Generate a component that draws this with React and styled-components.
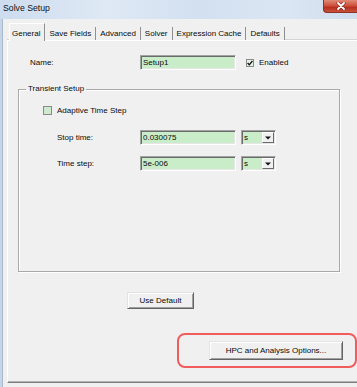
import React from 'react';
import styled, { createGlobalStyle } from 'styled-components';

const GlobalStyle = createGlobalStyle`
  html, body {
    margin: 0;
    padding: 0;
    background: #f0f0f0;
    overflow: hidden;
  }
  body {
    font-family: "Liberation Sans", Arial, sans-serif;
    font-size: 8px;
    color: #0a0a0a;
  }
`;

const Window = styled.div`
  width: 357px;
  height: 387px;
  display: flex;
  flex-direction: column;
  overflow: hidden;
  background: #f0f0f0;
`;

const TitleBar = styled.div`
  height: 19px;
  flex: none;
  display: grid;
  grid-template-columns: 1fr 34px;
  align-items: start;
  background: linear-gradient(90deg, #cddcee 0%, #dfe9f5 30%, #d2e0f0 55%, #dbe6f3 80%, #cfdded 100%);
`;

const Title = styled.span`
  font-size: 8.7px;
  line-height: 16px;
  padding-left: 3px;
  color: #111;
`;

const CloseButton = styled.div`
  height: 13px;
  display: flex;
  align-items: center;
  justify-content: center;
  box-sizing: border-box;
  border-left: 1px solid #8c3328;
  border-bottom: 1px solid #8c3328;
  border-radius: 0 0 0 4px;
  background: #c84a38 linear-gradient(#e08a78, #cc4d39 50%, #b8301f 60%, #c9503a);
`;

const Body = styled.div`
  flex: 1;
  display: flex;
  flex-direction: column;
  border-left: 2px solid #c7d6e7;
  box-shadow: inset 1px 0 0 #a9bacd;
  padding: 4px 0 4px 5px;
  overflow: hidden;
`;

const TabStrip = styled.div`
  height: 17px;
  flex: none;
  display: flex;
  align-items: flex-end;
  margin-left: 2px;
  position: relative;
  z-index: 1;
`;

const Tab = styled.div`
  box-sizing: border-box;
  display: flex;
  align-items: center;
  white-space: nowrap;
  background: #f0f0f0;
  border-right: 1px solid #8f8f8f;
  height: ${p => (p.$active ? '18px' : '13px')};
  margin-bottom: ${p => (p.$active ? '-1px' : '0')};
  padding: ${p => (p.$active ? '3px 4px 1px 2px' : '0 4px')};
  border-top: ${p => (p.$active ? '1px solid #ffffff' : 'none')};
  border-left: ${p => (p.$active ? '1px solid #ffffff' : 'none')};
`;

const Panel = styled.div`
  flex: 1;
  display: flex;
  flex-direction: column;
  border-top: 1px solid #ffffff;
  border-left: 1px solid #ffffff;
  border-bottom: 1px solid #7d7d7d;
  box-shadow: 0 -1px 0 #d4d4d4, inset 0 -1px 0 #b4b4b4;
`;

const Row = styled.div`
  display: flex;
  align-items: center;
  height: ${p => p.$h || 15}px;
  margin-top: ${p => p.$top || 0}px;
  padding-left: ${p => p.$indent || 0}px;
`;

const Label = styled.span`
  width: ${p => p.$w}px;
  flex: none;
  white-space: nowrap;
`;

const Field = styled.div`
  box-sizing: border-box;
  width: ${p => p.$w}px;
  height: 15px;
  display: flex;
  align-items: center;
  flex: none;
  margin-left: ${p => p.$left || 0}px;
  padding-left: 2px;
  background: #c9edc9;
  border: 1px solid;
  border-color: #a3a3a3 #ffffff #ffffff #a3a3a3;
  box-shadow: inset 1px 1px 0 #6b6b6b, inset -1px -1px 0 #e6e6e6;
`;

const DropButton = styled.div`
  margin-left: auto;
  margin-right: 1px;
  width: 12px;
  height: 11px;
  box-sizing: border-box;
  display: flex;
  align-items: center;
  justify-content: center;
  background: #f0f0f0;
  border: 1px solid;
  border-color: #ffffff #6b6b6b #6b6b6b #ffffff;
`;

const Check = styled.div`
  box-sizing: border-box;
  width: ${p => p.$size}px;
  height: ${p => p.$size}px;
  flex: none;
  display: flex;
  align-items: center;
  justify-content: center;
  margin-left: ${p => p.$left || 0}px;
  margin-right: 5px;
  border: 1px solid #8a8a8a;
  background: ${p => (p.$checked ? '#e4f3e4' : '#cfe9cf')};
`;

const Group = styled.fieldset`
  box-sizing: border-box;
  width: 322px;
  height: 188px;
  margin: 14px 0 0 10px;
  padding: 0;
  min-width: 0;
  border: 1px solid #a9a9a9;
  box-shadow: inset 1px 1px 0 #ffffff, 1px 1px 0 #ffffff;
`;

const Legend = styled.legend`
  margin-left: 7px;
  padding: 0 2px;
  line-height: 10px;
  font-size: 8px;
`;

const Button = styled.div`
  box-sizing: border-box;
  width: ${p => p.$w}px;
  height: ${p => p.$h}px;
  display: flex;
  align-items: center;
  justify-content: center;
  background: #f0f0f0;
  border: 1px solid;
  border-color: #e3e3e3 #646464 #646464 #e3e3e3;
  box-shadow: inset 1px 1px 0 #ffffff, inset -1px -1px 0 #a0a0a0;
  white-space: nowrap;
`;

const Spacer = styled.div`
  margin-top: ${p => p.$top}px;
  margin-left: ${p => p.$left}px;
  align-self: flex-start;
`;

const Highlight = styled.div`
  box-sizing: border-box;
  width: 180px;
  height: 35px;
  margin: 24px 0 0 169px;
  padding: 6px 0 0 30px;
  border: 2px solid #f15c5c;
  border-radius: 8px;
`;

const CheckMark = () => (
  <svg width="6" height="6" viewBox="0 0 6 6">
    <path d="M0.6 3 L2.3 4.8 L5.4 1" fill="none" stroke="#111" strokeWidth="1.3" />
  </svg>
);

const Arrow = () => (
  <svg width="6" height="4" viewBox="0 0 6 4">
    <path d="M0 0.5 H6 L3 3.5 Z" fill="#111" />
  </svg>
);

const CloseX = () => (
  <svg width="10" height="8" viewBox="0 0 10 8">
    <path d="M2 1 L8 7 M8 1 L2 7" stroke="#6e2219" strokeWidth="3" strokeLinecap="round" />
    <path d="M2 1 L8 7 M8 1 L2 7" stroke="#ffffff" strokeWidth="1.8" strokeLinecap="round" />
  </svg>
);

const Dropdown = ({ value }) => (
  <Field $w={35} $left={5}>
    <span>{value}</span>
    <DropButton><Arrow /></DropButton>
  </Field>
);

const tabs = ['General', 'Save Fields', 'Advanced', 'Solver', 'Expression Cache', 'Defaults'];

const App = () => (
  <>
    <GlobalStyle />
    <Window>
      <TitleBar>
        <Title>Solve Setup</Title>
        <CloseButton><CloseX /></CloseButton>
      </TitleBar>
      <Body>
        <TabStrip>
          {tabs.map((t, i) => (
            <Tab key={t} $active={i === 0}>{t}</Tab>
          ))}
        </TabStrip>
        <Panel>
          <Row $top={14} $indent={22}>
            <Label $w={110}>Name:</Label>
            <Field $w={96}>Setup1</Field>
            <Check $size={8} $left={10} $checked><CheckMark /></Check>
            <span>Enabled</span>
          </Row>
          <Group>
            <Legend>Transient Setup</Legend>
            <Row $top={11} $h={10} $indent={24}>
              <Check $size={9} />
              <span>Adaptive Time Step</span>
            </Row>
            <Row $top={15} $indent={38}>
              <Label $w={83}>Stop time:</Label>
              <Field $w={96}>0.030075</Field>
              <Dropdown value="s" />
            </Row>
            <Row $top={11} $indent={38}>
              <Label $w={83}>Time step:</Label>
              <Field $w={96}>5e-006</Field>
              <Dropdown value="s" />
            </Row>
          </Group>
          <Spacer $top={20} $left={119}>
            <Button $w={67} $h={17}>Use Default</Button>
          </Spacer>
          <Highlight>
            <Button $w={134} $h={19}>HPC and Analysis Options...</Button>
          </Highlight>
        </Panel>
      </Body>
    </Window>
  </>
);

export default App;
